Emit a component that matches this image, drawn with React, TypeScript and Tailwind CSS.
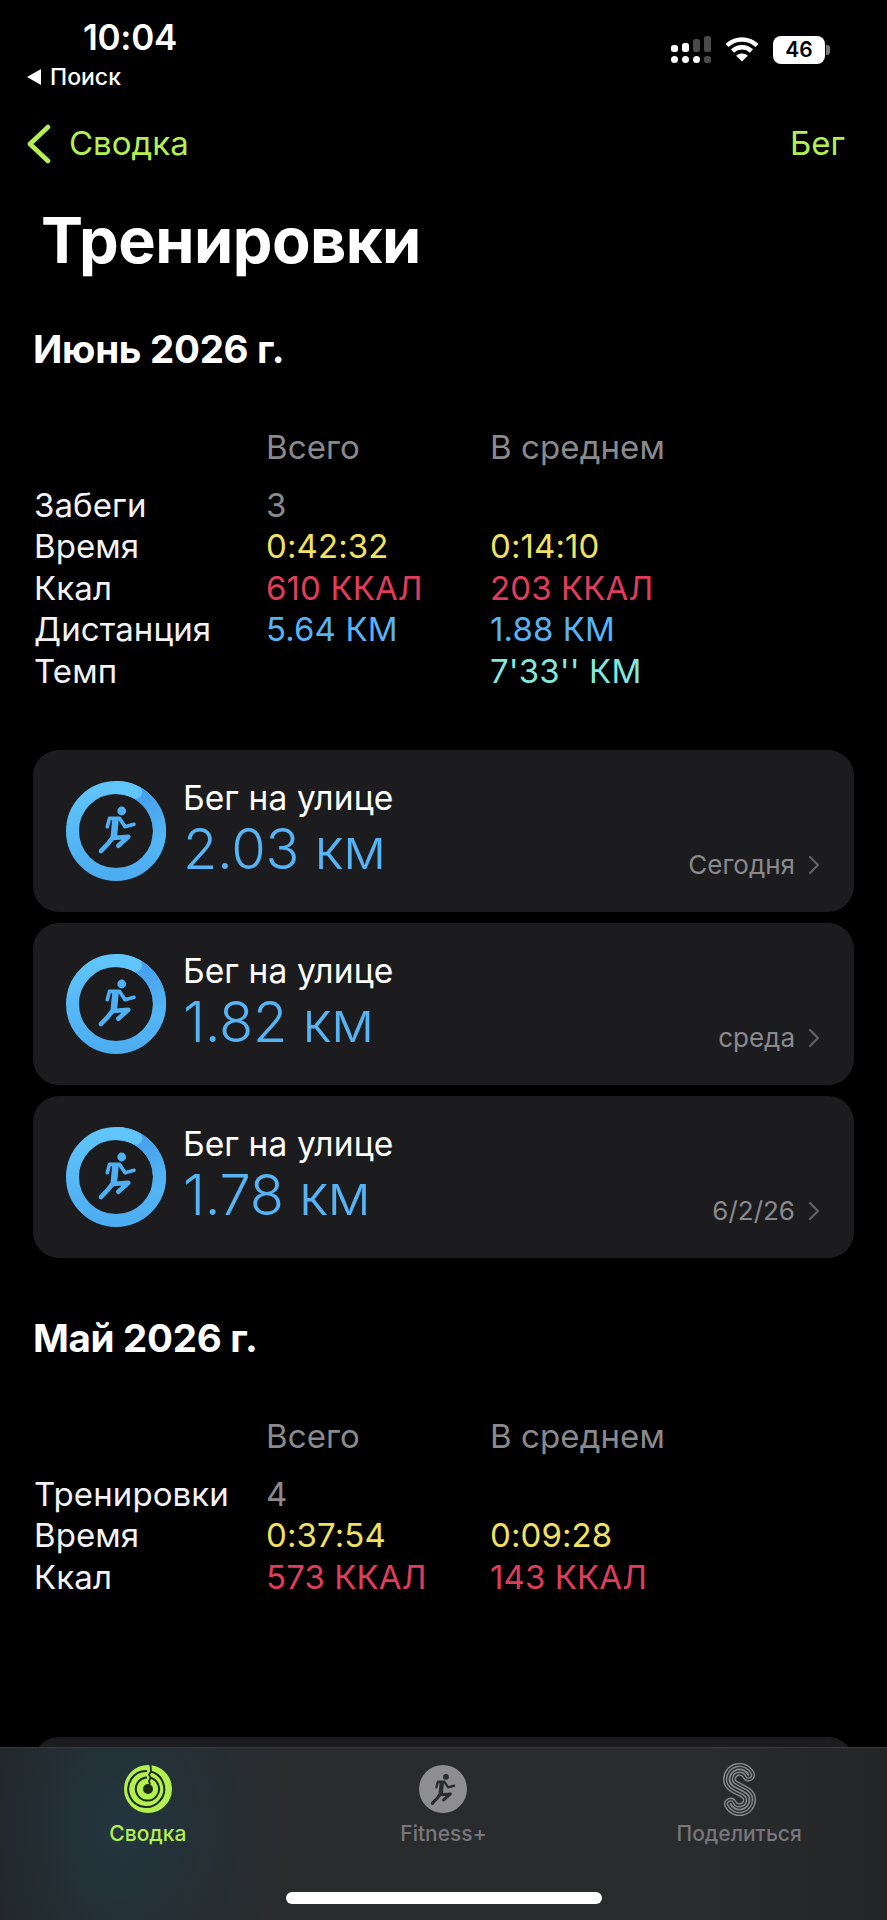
import React from 'react';

const FONT = 'font-["Inter","Liberation_Sans",sans-serif]';

function RunnerShape({ color }: { color: string }) {
  return (
    <g fill="none" stroke={color} strokeWidth="3.6" strokeLinecap="round" strokeLinejoin="round">
      <circle cx="23.7" cy="6" r="4.4" fill={color} stroke="none" />
      <path d="M9.3 21.7 L11.5 13.3 L21.5 13.3 L27 21.7 L36 19.3" />
      <path d="M17.5 14.5 L15.8 32" strokeWidth="6.6" strokeLinecap="butt" />
      <path d="M15.3 33 L30.3 31.7 L20.3 40.7" strokeWidth="4.6" />
      <path d="M14.5 33 L10.3 38.3 L3 46" strokeWidth="4.6" />
    </g>
  );
}

function Ring() {
  return (
    <svg viewBox="0 0 100 100" className="w-[100px] h-[100px] shrink-0">
      <defs>
        <linearGradient id="ringBase" x1="0" y1="0" x2="0" y2="1">
          <stop offset="0" stopColor="#60c5fa" />
          <stop offset="1" stopColor="#4dadf1" />
        </linearGradient>
        <linearGradient id="ringShade" x1="0.3" y1="0" x2="0.7" y2="1">
          <stop offset="0" stopColor="#469fec" />
          <stop offset="1" stopColor="#52b4f4" />
        </linearGradient>
      </defs>
      <circle cx="50" cy="50" r="43.5" fill="none" stroke="url(#ringBase)" strokeWidth="13" />
      <path d="M69.7 11.2 A43.5 43.5 0 0 1 92 61" fill="none" stroke="url(#ringShade)" strokeWidth="13" />
      <path d="M50 6.5 A43.5 43.5 0 0 1 69.7 11.2" fill="none" stroke="#60c5fa" strokeWidth="13" strokeLinecap="round" />
      <g transform="translate(32 24)">
        <RunnerShape color="#4fb1f3" />
      </g>
    </svg>
  );
}

type Cell = { text: string; color: string };
type StatRow = { label: string; total?: Cell; avg?: Cell };

const yellow = 'text-[#f0e260]';
const red = 'text-[#e03c5c]';
const blue = 'text-[#56b4f5]';
const teal = 'text-[#80e8dc]';
const gray = 'text-[#8a8a8e]';

const juneRows: StatRow[] = [
  { label: 'Забеги', total: { text: '3', color: gray } },
  { label: 'Время', total: { text: '0:42:32', color: yellow }, avg: { text: '0:14:10', color: yellow } },
  { label: 'Ккал', total: { text: '610 ККАЛ', color: red }, avg: { text: '203 ККАЛ', color: red } },
  { label: 'Дистанция', total: { text: '5.64 КМ', color: blue }, avg: { text: '1.88 КМ', color: blue } },
  { label: 'Темп', avg: { text: "7'33'' КМ", color: teal } },
];

const mayRows: StatRow[] = [
  { label: 'Тренировки', total: { text: '4', color: gray } },
  { label: 'Время', total: { text: '0:37:54', color: yellow }, avg: { text: '0:09:28', color: yellow } },
  { label: 'Ккал', total: { text: '573 ККАЛ', color: red }, avg: { text: '143 ККАЛ', color: red } },
];

const workouts = [
  { value: '2.03 км', when: 'Сегодня' },
  { value: '1.82 км', when: 'среда' },
  { value: '1.78 км', when: '6/2/26' },
];

function StatsTable({ rows }: { rows: StatRow[] }) {
  return (
    <div className="ml-[34px] text-[33px] tracking-[0.1px]">
      <div className="grid grid-cols-[232px_224px_1fr] h-[59px] leading-[42px] text-[#8a8a8e]">
        <div />
        <div>Всего</div>
        <div>В среднем</div>
      </div>
      {rows.map((row) => (
        <div key={row.label} className="grid grid-cols-[232px_224px_1fr] h-[41.4px] leading-[41.4px]">
          <div className="text-[#f2f2f7]">{row.label}</div>
          <div className={row.total?.color}>{row.total?.text}</div>
          <div className={row.avg?.color}>{row.avg?.text}</div>
        </div>
      ))}
    </div>
  );
}

function WorkoutCard({ value, when }: { value: string; when: string }) {
  return (
    <div className="h-[162px] rounded-[26px] bg-[#1c1c1e] flex items-center pl-[33px] pr-[32px]">
      <Ring />
      <div className="ml-[17px] flex-1 min-w-0">
        <div className="text-[33.5px] leading-[40px] text-white -mt-[3px] tracking-[0.1px]">Бег на улице</div>
        <div className="text-[56px] leading-[62px] text-[#56b4f5] tracking-[-0.3px] font-light">{value}</div>
      </div>
      <div className="self-end mb-[30px] flex items-center gap-[13px] text-[26px] leading-[34px] text-[#8a8a8e]">
        <span>{when}</span>
        <svg viewBox="0 0 12 20" className="w-[12px] h-[20px] mr-[2px]" fill="none" stroke="#636366" strokeWidth="2.2" strokeLinecap="round" strokeLinejoin="round">
          <path d="M2 2 L10 10 L2 18" />
        </svg>
      </div>
    </div>
  );
}

function SignalIcon() {
  return (
    <svg viewBox="0 0 40 28" className="w-[40px] h-[28px] ml-[1px]">
      <rect x="0" y="9" width="7" height="7" rx="2.5" fill="#fff" />
      <rect x="11" y="7" width="7" height="9" rx="2.5" fill="#fff" />
      <rect x="22" y="3" width="7" height="13" rx="2.5" fill="#4a4a4a" />
      <rect x="33" y="0" width="7" height="16" rx="2.5" fill="#4a4a4a" />
      <circle cx="3.5" cy="23.5" r="3.5" fill="#fff" />
      <circle cx="14.5" cy="23.5" r="3.5" fill="#fff" />
      <circle cx="25.5" cy="23.5" r="3.5" fill="#fff" />
      <rect x="33" y="20" width="7" height="7" rx="2.5" fill="#4a4a4a" />
    </svg>
  );
}

function WifiIcon() {
  return (
    <svg viewBox="0 0 34 26" className="w-[34px] h-[26px]" fill="none" stroke="#fff" strokeWidth="4.4">
      <path d="M2 9.5 C10.5 1.5 23.5 1.5 32 9.5" />
      <path d="M7.5 15 C13 10 21 10 26.5 15" />
      <path d="M17 25.5 L11.2 19.8 C14.6 16.8 19.4 16.8 22.8 19.8 Z" fill="#fff" stroke="none" />
    </svg>
  );
}

function ActivityIcon() {
  return (
    <svg viewBox="0 0 48 48" className="w-[48px] h-[48px]" fill="none">
      <circle cx="24" cy="24" r="24" fill="#b4f04f" />
      <path d="M26.5 6.5 A18 18 0 1 1 23 6" stroke="#1c2a14" strokeWidth="2" />
      <path d="M26.5 12.8 A11.6 11.6 0 1 1 23 12.4" stroke="#1c2a14" strokeWidth="2" />
      <circle cx="24" cy="24" r="5" fill="#1c2a14" />
      <path d="M26.5 0 L27 6.5 L25 9.5 L26.5 12.8 L25 16 L26 19.5" stroke="#1c2a14" strokeWidth="1.8" />
    </svg>
  );
}

function ShareIcon() {
  const d = 'M25.5 12 A10 10 0 0 0 6.5 16.5 C6.5 27 26.5 26 26.5 36.5 A10 10 0 0 1 7.5 41';
  return (
    <svg viewBox="0 0 33 53" className="w-[33px] h-[53px]" fill="none" strokeLinecap="round">
      <path d={d} stroke="#8a8a8e" strokeWidth="13" />
      <path d={d} stroke="#2a2b2d" strokeWidth="10.2" />
      <path d={d} stroke="#8a8a8e" strokeWidth="7.4" />
      <path d={d} stroke="#2a2b2d" strokeWidth="4.6" />
      <path d={d} stroke="#8a8a8e" strokeWidth="1.8" />
    </svg>
  );
}

export default function App() {
  return (
    <div className={`relative w-[887px] h-[1920px] overflow-hidden bg-black text-white ${FONT}`}>
      {/* status bar */}
      <div className="flex justify-between h-[95px]">
        <div className="pl-[27px] pt-[18px]">
          <div className="pl-[56px] text-[35px] leading-[38px] font-semibold tracking-[-0.3px]">10:04</div>
          <div className="flex items-center mt-[6px] h-[30px]">
            <svg viewBox="0 0 14 16" className="w-[14px] h-[16px] mr-[9px]"><path d="M14 0 V16 L0 8 Z" fill="#fff" /></svg>
            <span className="text-[23px] font-medium">Поиск</span>
          </div>
        </div>
        <div className="flex items-start gap-[14px] pt-[36px] pr-[57px]">
          <SignalIcon />
          <WifiIcon />
          <div className="flex items-center">
            <div className="w-[52px] h-[28px] rounded-[8px] bg-white text-black text-[21px] leading-[28px] font-semibold text-center">46</div>
            <div className="ml-[1px] w-[4px] h-[10px] rounded-r-[3px] bg-[#777]" />
          </div>
        </div>
      </div>

      {/* nav */}
      <div className="flex items-center justify-between h-[96px] pl-[27px] pr-[42px] text-[33px] text-[#b4f04f] mt-[1px]">
        <div className="flex items-center">
          <svg viewBox="0 0 24 40" className="w-[24px] h-[40px] mr-[18px]" fill="none" stroke="#b4f04f" strokeWidth="4.6" strokeLinecap="round" strokeLinejoin="round">
            <path d="M21 3 L3 20 L21 37" />
          </svg>
          <span>Сводка</span>
        </div>
        <span>Бег</span>
      </div>

      {/* title */}
      <h1 className="pl-[41px] mt-[12px] text-[63px] leading-[72px] font-bold tracking-[-0.5px]">Тренировки</h1>

      <h2 className="pl-[33px] mt-[50px] text-[38.5px] leading-[46px] font-bold tracking-[-0.3px]">Июнь 2026 г.</h2>
      <div className="mt-[54px]">
        <StatsTable rows={juneRows} />
      </div>

      <div className="mx-[33px] mt-[58px] flex flex-col gap-[11px]">
        {workouts.map((w) => (
          <WorkoutCard key={w.value} value={w.value} when={w.when} />
        ))}
      </div>

      <h2 className="pl-[33px] mt-[57px] text-[38.5px] leading-[46px] font-bold tracking-[-0.3px]">Май 2026 г.</h2>
      <div className="mt-[54px]">
        <StatsTable rows={mayRows} />
      </div>

      {/* next card peeking under the tab bar */}
      <div className="mx-[33px] mt-[139px] h-[162px] rounded-[26px] bg-[#1c1c1e]" />

      {/* tab bar */}
      <div className="absolute left-0 right-0 bottom-0 h-[173px] border-t border-[#3a3a3c] bg-[radial-gradient(ellipse_170px_240px_at_120px_45%,#23363f_0%,rgba(35,54,63,0)_100%),linear-gradient(90deg,#212325_0%,#2a2b2d_30%,#2a2b2d_80%,#242527_100%)]">
        <div className="grid grid-cols-3 pt-[14px]">
          <div className="flex flex-col items-center">
            <div className="h-[54px] flex items-center"><ActivityIcon /></div>
            <span className="mt-[5px] text-[21px] leading-[26px] font-medium text-[#b4f04f]">Сводка</span>
          </div>
          <div className="flex flex-col items-center">
            <div className="h-[54px] flex items-center">
              <div className="w-[48px] h-[48px] rounded-full bg-[#8e8e90] flex items-center justify-center">
                <svg viewBox="0 0 40 50" className="w-[27px] h-[33px]"><RunnerShape color="#2a2b2d" /></svg>
              </div>
            </div>
            <span className="mt-[5px] text-[21px] leading-[26px] font-medium text-[#77777b]">Fitness+</span>
          </div>
          <div className="flex flex-col items-center">
            <div className="h-[54px] flex items-center"><ShareIcon /></div>
            <span className="mt-[5px] text-[21px] leading-[26px] font-medium text-[#77777b]">Поделиться</span>
          </div>
        </div>
        <div className="absolute left-[286px] bottom-[16px] w-[316px] h-[12px] rounded-full bg-white" />
      </div>
    </div>
  );
}
